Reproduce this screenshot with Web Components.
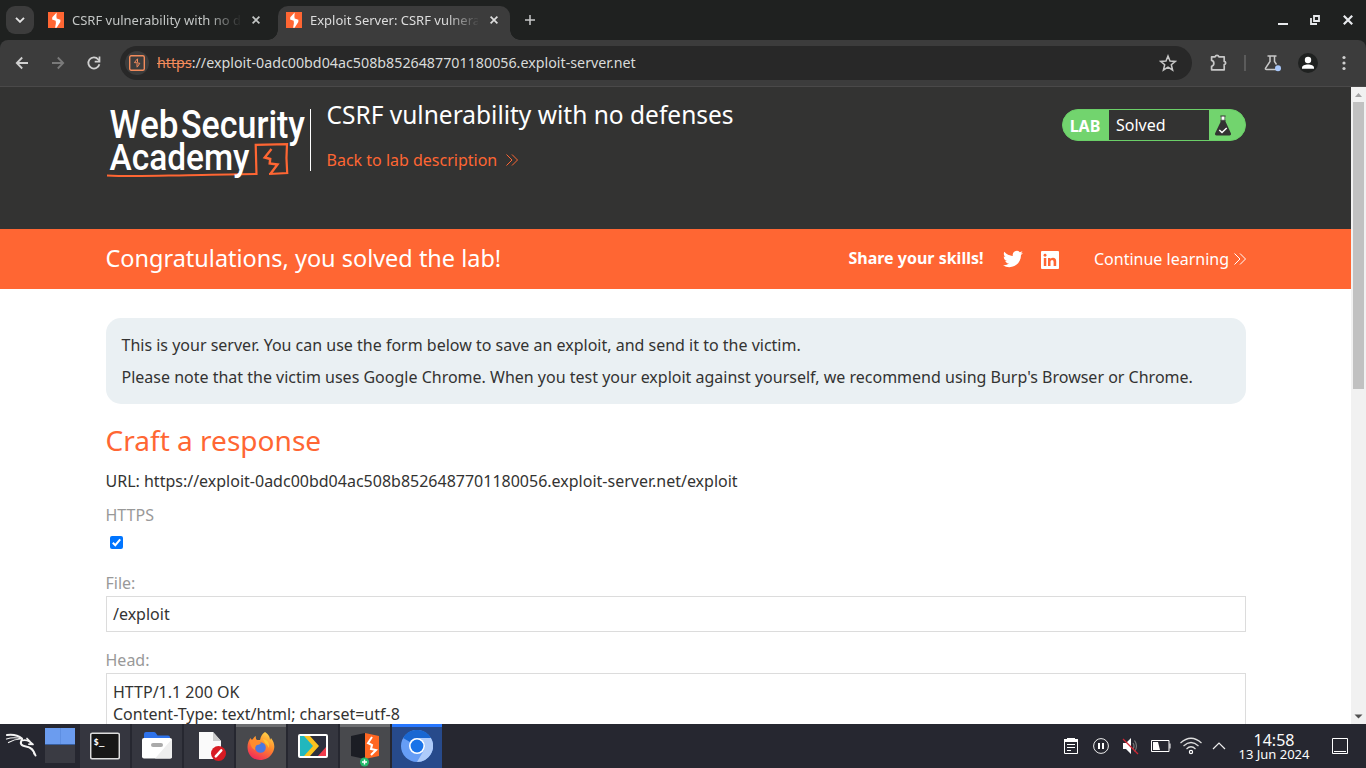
<!DOCTYPE html>
<html lang="en">
<head>
<meta charset="utf-8">
<title>Exploit Server: CSRF vulnerability with no defenses</title>
<style>
html,body{margin:0;height:100%;overflow:hidden;background:#fff}
body{font-family:"Noto Sans",sans-serif}
</style>
</head>
<body>
<desktop-screen></desktop-screen>
<script>
const define = (name, html) => {
  const t = document.createElement('template');
  t.innerHTML = html;
  customElements.define(name, class extends HTMLElement {
    constructor() {
      super();
      this.attachShadow({ mode: 'open' }).appendChild(t.content.cloneNode(true));
    }
  });
};

define('burp-mark', `
<style>:host{display:block;width:16px;height:16px;flex:none}svg{display:block}</style>
<svg width="16" height="16" viewBox="0 0 16 16"><rect width="16" height="16" fill="#ff6633"/><path d="M8.700.5L4.300 5.200l-.2 2.300 3.600 1.200.2 2.600-.8 4.500h1.500L12.300 9.900l.1-2.200-3.700-1.300-.3-2z" fill="#fff"/></svg>`);

define('browser-tab', `
<style>
:host{display:flex;align-items:center;box-sizing:border-box;width:232px;height:34px;padding:0 0 6px 8px;color:#c3c6c5;font-size:13px;line-height:18px;position:relative}
:host([active]){background:#3c3c3c;border-radius:10px 10px 0 0;color:#dedede}
:host([active])::before,:host([active])::after{content:"";position:absolute;bottom:0;width:10px;height:10px}
:host([active])::before{left:-10px;background:radial-gradient(circle at 0 0,transparent 9.5px,#3c3c3c 10px)}
:host([active])::after{right:-10px;background:radial-gradient(circle at 100% 0,transparent 9.5px,#3c3c3c 10px)}
.t{margin-left:8px;width:168px;overflow:hidden;white-space:nowrap;-webkit-mask:linear-gradient(90deg,#000 136px,transparent 170px);mask:linear-gradient(90deg,#000 136px,transparent 170px)}
svg{margin-left:12px;display:block}
</style>
<burp-mark></burp-mark><div class="t"><slot></slot></div>
<svg width="8" height="8" viewBox="0 0 8 8"><path d="M.6.6l6.8 6.8M7.4.6L.6 7.4" stroke="currentColor" stroke-width="1.7"/></svg>`);

define('tab-strip', `
<style>
:host{display:flex;height:40px;box-sizing:border-box;padding:6px 13px 0 6px;background:#1f2120}
.menu{width:28px;height:28px;border-radius:9px;background:#3c3c3c;display:grid;place-items:center;margin-right:6px}
browser-tab+browser-tab{margin-left:6px}
.plus{margin:9px 0 0 15px}.win{margin:9px 0 0 auto;display:flex;gap:22px}
svg{display:block}
</style>
<div class="menu"><svg width="10" height="6" viewBox="0 0 10 6"><path d="M1 .8l4 4 4-4" fill="none" stroke="#e4e4e4" stroke-width="1.9"/></svg></div>
<browser-tab>CSRF vulnerability with no defenses</browser-tab>
<browser-tab active>Exploit Server: CSRF vulnerability with no defenses</browser-tab>
<svg class="plus" width="10" height="10" viewBox="0 0 10 10"><path d="M5 0v10M0 5h10" stroke="#c8c8c8" stroke-width="1.5"/></svg>
<div class="win">
<svg width="10" height="10"><path d="M0 9h10" stroke="#e8eaed" stroke-width="2"/></svg>
<svg width="10" height="10"><path d="M4 1h5v5H4zM1 3v6h6" fill="none" stroke="#e8eaed" stroke-width="1.8"/></svg>
<svg width="10" height="10" style="margin-left:1px"><path d="M.8.8l8.400 8.400M9.200.8L.8 9.200" stroke="#e8eaed" stroke-width="2.200"/></svg>
</div>`);

define('tool-bar', `
<style>
:host{display:block;background:#1f2120;height:47px}
.bar{display:flex;align-items:center;box-sizing:border-box;height:47px;padding:0 20px 1px 14px;background:#3c3c3c;border-radius:8px 8px 0 0;border-bottom:1px solid #4a4949}
svg{display:block;flex:none}
.url{display:flex;flex:none;align-items:center;width:1072px;height:34px;border-radius:17px;background:#282828;margin-left:18px;box-sizing:border-box;padding:0 15px 0 5px;color:#d9dbda;font-size:14.28px;line-height:20px}
.chip{width:24px;height:24px;border-radius:12px;background:#3c3c3c;display:grid;place-items:center;margin-right:8px}
.u{flex:1;white-space:nowrap}s{color:#f28b5c;text-decoration-thickness:1px}
.sep{width:2px;height:16px;background:#5b5b5b;margin-left:16px}
</style>
<div class="bar">
<svg width="16" height="16" viewBox="0 0 16 16"><path d="M8.2 2.5L2.8 8l5.4 5.5M3 8h11" fill="none" stroke="#d0d0d0" stroke-width="1.8"/></svg>
<svg width="16" height="16" viewBox="0 0 16 16" style="margin-left:20px"><path d="M7.8 2.5L13.2 8l-5.4 5.5M2 8h11" fill="none" stroke="#7a7a7a" stroke-width="1.8"/></svg>
<svg width="16" height="16" viewBox="0 0 16 16" style="margin-left:20px"><path d="M13.4 9.3A5.6 5.6 0 1 1 12.2 4.3L13.5 5.7" fill="none" stroke="#d0d0d0" stroke-width="1.8"/><path d="M13.5 1.6v5H8.7" fill="none" stroke="#d0d0d0" stroke-width="1.7"/></svg>
<div class="url"><div class="chip"><svg width="16" height="16" viewBox="0 0 16 16"><rect x=".7" y=".7" width="14.6" height="14.6" rx="1.5" fill="none" stroke="#f28b5c" stroke-width="1.4"/><path d="M8.600 3.600L5.400 7.600l2.900.3 2.500.4-2.700 4M8.500 4v3.500M8 8.500v3.300" fill="none" stroke="#f28b5c" stroke-width="1"/></svg></div>
<div class="u"><s>https</s>://exploit-0adc00bd04ac508b8526487701180056.exploit-server.net</div>
<svg width="18" height="18" viewBox="0 0 18 18"><path d="M9 2l2 5 5.3.4-4 3.4 1.3 5.2L9 13.1 4.4 16l1.3-5.2-4-3.4L7 7z" fill="none" stroke="#c7c7c7" stroke-width="1.5"/></svg></div>
<svg width="18" height="18" viewBox="0 0 18 18" style="margin-left:18px"><path d="M1.6 2.8h3.5c.5-2 3.3-2 3.8 0h5.3v4.6c2 .4 2 2.800 0 3.2v5.200H1.600v-3.500c3-.6 3-5.300 0-5.900z" fill="none" stroke="#c7c7c7" stroke-width="1.700" stroke-linejoin="round"/></svg>
<div class="sep"></div>
<svg width="18" height="18" viewBox="0 0 18 18" style="margin-left:18px"><path d="M3.500 2h9M6 2v5.500L1.600 14q-.6 1.500 1 1.500h11M10.500 2v5.500l2 3" fill="none" stroke="#c7c7c7" stroke-width="1.500"/><circle cx="14" cy="14.200" r="3" fill="#a8c7fa"/></svg>
<svg width="20" height="20" viewBox="0 0 20 20" style="margin-left:16px"><circle cx="10" cy="10" r="10" fill="#1f2120"/><circle cx="10" cy="7" r="3.200" fill="#fff"/><path d="M4 15.800v-1.300c0-2 3-3.100 6-3.100s6 1.100 6 3.100v1.300z" fill="#fff"/></svg>
<svg width="4" height="16" viewBox="0 0 4 16" style="margin-left:24px"><g fill="#d0d0d0"><circle cx="2" cy="2.500" r="1.600"/><circle cx="2" cy="8" r="1.600"/><circle cx="2" cy="13.500" r="1.600"/></g></svg>
</div>`);

define('double-chevron', `
<style>:host{display:inline-block;width:12px;height:12px}svg{display:block}</style>
<svg width="12" height="12" viewBox="0 0 12 12"><path d="M.5.5L6 6 .5 11.500M6 .5L11.500 6 6 11.500" fill="none" stroke="currentColor" stroke-width="1"/></svg>`);

define('academy-logo', `
<style>:host{display:block;width:204.5px;height:76px}svg{display:block;overflow:visible}text{font-family:Roboto,sans-serif;font-weight:500;fill:#fff}</style>
<svg width="204" height="76" viewBox="106 105 204 76">
<path d="M107 175.500c30 1.500 60-.3 95-.6 20-.5 40-1 54.500-1" fill="none" stroke="#ff6633" stroke-width="2"/>
<path d="M256.500 175L255.700 144.800l31.300-.6q-1.200 14 .2 28.800L269 174" fill="none" stroke="#ff6633" stroke-width="2.200"/>
<path d="M271.500 149l-6.800 8.500 5.500 1.500-.500 4.500 7.800 1-7 9.300" fill="none" stroke="#ff6633" stroke-width="2.400"/>
<text x="109.500" y="137.700" font-size="38" textLength="69" lengthAdjust="spacingAndGlyphs">Web</text>
<text x="181" y="137.700" font-size="38" textLength="124" lengthAdjust="spacingAndGlyphs">Security</text>
<text x="109.500" y="170" font-size="37.500" textLength="140" lengthAdjust="spacingAndGlyphs">Academy</text></svg>`);

define('lab-status', `
<style>
:host{display:flex;box-sizing:border-box;width:184px;height:32px;border:1px solid #6bcf68;border-radius:16px;background:#72d46e;overflow:hidden;color:#fff;line-height:30px;font-size:16px}
b{width:46px;padding-right:1px;text-align:center;font-weight:700;padding-top:1px;box-sizing:border-box}
span{width:100px;box-sizing:border-box;padding-left:7.5px;background:#333332}
svg{margin:4px 0 0 4px}
</style><b>LAB</b><span>Solved</span>
<svg width="20" height="24" viewBox="0 0 20 24"><path d="M7.500 6h5v1.500L18 19.500q.4 2-1.500 2h-13q-1.900 0-1.500-2L7.500 8z" fill="#333332"/><path d="M7 2h6M8.200 2h3.600v4.200H8.200z" fill="#fff" stroke="#333332" stroke-width=".6"/><path d="M6.300 16l2.700 2.500L13.700 14" fill="none" stroke="#fff" stroke-width="1.500"/></svg>`);

define('lab-header', `
<style>
:host{display:flex;height:142px;box-sizing:border-box;background:#333332;padding:18px 105.5px 0 105.5px}
.r{border-left:1px solid #fff;height:62px;margin-top:4px;padding-left:15.5px;flex:1}
h2{margin:-11px 0 0;font-size:24.5px;line-height:33px;font-weight:400;color:#fff}
.bk{display:flex;align-items:center;color:#ff6633;line-height:22px;margin-top:18px;gap:9px}
lab-status{margin-top:4px}
</style>
<academy-logo></academy-logo><div class="r"><h2>CSRF vulnerability with no defenses</h2><div class="bk">Back to lab description<double-chevron></double-chevron></div></div><lab-status></lab-status>`);

define('solved-banner', `
<style>
:host{display:flex;align-items:center;height:60px;box-sizing:border-box;background:#ff6633;color:#fff;padding:0 105.5px 0 105.5px}
h3{margin:-2px 0 0;flex:1;font-size:23.48px;line-height:33px;font-weight:400}
b{font-weight:700;line-height:22px;margin-top:-3px}
.c{display:flex;align-items:center;gap:4.5px;line-height:22px;margin-left:35px}
svg{display:block}
</style>
<h3>Congratulations, you solved the lab!</h3><b>Share your skills!</b>
<svg width="20" height="20" viewBox="0 0 24 24" style="margin-left:19.5px"><path fill="#fff" d="M23.950 4.570a10 10 0 0 1-2.820.770 4.960 4.960 0 0 0 2.160-2.720c-.950.550-2 .950-3.120 1.180a4.920 4.920 0 0 0-8.390 4.480C7.690 8.090 4.070 6.130 1.640 3.160a4.820 4.820 0 0 0-.670 2.480c0 1.710.870 3.210 2.190 4.100a4.900 4.900 0 0 1-2.230-.620v.060a4.920 4.920 0 0 0 3.950 4.830 5 5 0 0 1-2.210.080 4.940 4.940 0 0 0 4.600 3.420A9.870 9.870 0 0 1 0 19.540a14 14 0 0 0 7.550 2.210c9.050 0 14-7.500 14-13.980l-.020-.640a9.940 9.940 0 0 0 2.420-2.560z"/></svg>
<svg width="18" height="18" viewBox="0 0 18 18" style="margin:1px 0 0 18px"><rect width="18" height="18" rx="1" fill="#fff"/><path d="M2.800 7h2.500v8H2.800zM7 7h2.500v8H7zM9.500 10.500q.2-1.500 1.600-1.500 1.500 0 1.500 1.900V15h2.600v-4.700q0-3.500-3.200-3.500-1.700 0-2.500 1.300z" fill="#ff6633"/><circle cx="4.050" cy="4.300" r="1.450" fill="#ff6633"/></svg>
<div class="c">Continue learning<double-chevron></double-chevron></div>`);

define('form-field', `
<style>:host{display:block}label{display:block;color:#999;line-height:22px;height:24px}
.b{border:1px solid #dcdcdc;box-sizing:border-box;height:var(--h,36px);padding:var(--p,6px) 6.500px;line-height:22px;color:#333332;white-space:pre-line}</style>
<label><slot name="label"></slot></label><div class="b"><slot></slot></div>`);

define('check-box', `
<style>:host{display:block;width:13px;height:13px}svg{display:block}</style>
<svg width="13" height="13"><rect width="13" height="13" rx="2" fill="#0075ff"/><path d="M2.800 6.700l2.500 2.500L10.200 3.300" fill="none" stroke="#fff" stroke-width="2"/></svg>`);

define('exploit-form', `
<style>
:host{display:block;padding:29px 105.5px 0 105.5px;color:#333332;font-size:16px;line-height:22px}
.n{box-sizing:border-box;height:86px;border-radius:15px;background:#eaf0f3;padding:16px;display:grid;gap:10px}
h1{font-weight:400;font-size:28.05px;line-height:38px;margin:17px 0 11px;color:#ff6633}
.h{color:#999;margin-top:12px}check-box{margin:10px 0 0 4.5px}form-field{margin-top:23px}form-field+form-field{margin-top:17px;--h:140px;--p:7px}
</style>
<div class="n"><div>This is your server. You can use the form below to save an exploit, and send it to the victim.</div><div>Please note that the victim uses Google Chrome. When you test your exploit against yourself, we recommend using Burp's Browser or Chrome.</div></div>
<h1>Craft a response</h1>
<div>URL: https://exploit-0adc00bd04ac508b8526487701180056.exploit-server.net/exploit</div>
<div class="h">HTTPS</div><check-box></check-box>
<form-field><span slot="label">File:</span>/exploit</form-field>
<form-field><span slot="label">Head:</span>HTTP/1.1 200 OK<br>Content-Type: text/html; charset=utf-8</form-field>`);

define('scroll-bar', `
<style>:host{display:flex;flex-direction:column;width:15px;background:#f1f1f1;align-items:center}.t{width:11px;height:287px;background:#c1c1c1;margin-bottom:auto}svg{display:block}</style>
<svg width="15" height="15"><path d="M4 10l3.500-4L11 10z" fill="#a3a3a3"/></svg><div class="t"></div><svg width="15" height="15"><path d="M3.500 5.500h8l-4 4z" fill="#505050"/></svg>`);

define('task-item', `
<style>:host{display:grid;place-items:center;box-sizing:border-box;width:50px;height:44px;background:#35363f;border-top:3px solid #35363f;padding-bottom:3px}
:host([open]){background:#48494d;border-top-color:#6d6e71}:host([active]){background:#274a8b;border-top-color:#2777ff}</style><slot></slot>`);

define('task-bar', `
<style>
:host{display:flex;height:44px;background:#262730;color:#fcfcfc}
svg{display:block;flex:none}
.items{display:flex;gap:2px;margin-left:5px}
.pager{width:30px;margin:4px 0 0 5px}.pager div{height:18px;background:#3a3b43}.pager div:first-child{background:linear-gradient(90deg,transparent 15px,#5e8fe2 15px 16px,transparent 16px),#6b9cef;border-bottom:1px solid #385f9f;height:16px}
.tray{margin-left:auto;display:flex;align-items:center;padding-right:18px}
.clock{text-align:center;width:80px;margin:0 0 0 8px;white-space:nowrap}.clock div{font-size:16px;line-height:18px}.clock div+div{font-size:13px;line-height:14px;margin-top:-2px}
</style>
<svg width="40" height="44" viewBox="0 0 40 44"><g fill="none" stroke="#f4f4f4" stroke-linecap="round" stroke-linejoin="round"><path d="M7 11c6-.8 11 .2 15 3.500" stroke-width="2"/><path d="M6.500 15c5-1.700 10-1.500 14.500-.5M8.500 18.500c4-2.300 8-3.500 12-3.500" stroke-width="1.200"/><path d="M22 15.500c-2.500 4-1 6.500 4 7 5 .5 7.500 3 9.500 9" stroke-width="2"/><path d="M22 16.500c3-1 5-.5 7.500 1l3.500 3-4-.3M27 14.500l3 3" stroke-width="1.700"/><path d="M28 23c4 .8 6 3.500 6 7" stroke-width="1.200"/></g></svg>
<div class="pager"><div></div><div></div></div>
<div class="items">
<task-item><svg width="30" height="30" viewBox="0 0 30 30"><rect x=".7" y="2.200" width="28.600" height="25.600" rx="1.500" fill="#171717" stroke="#ddd" stroke-width="1.500"/><text x="3.500" y="14" fill="#fff" font-family="DejaVu Sans Mono,monospace" font-weight="700" font-size="9">$_</text></svg></task-item>
<task-item><svg width="30" height="30" viewBox="0 0 30 30"><path d="M2 3q0-2 2-2h8q1.500 0 2.500 2l1 1.500H26q2 0 2 2V12H2z" fill="#2e72ea"/><rect y="7" width="30" height="20.500" rx="2" fill="#fff"/><path d="M30 8v18q0 1.500-2 1.500H13z" fill="#eee"/><rect x="9" y="12" width="12" height="4" rx="2" fill="#aaa"/></svg></task-item>
<task-item><svg width="30" height="30" viewBox="0 0 30 30" style="margin-left:3px"><path d="M3 1h14l8 9v18H3z" fill="#fafafa"/><path d="M17 1l8 9h-8z" fill="#ccc"/><circle cx="22.500" cy="22.500" r="7.500" fill="#d81b22"/><path d="M19.800 25.300l5.500-6" stroke="#fff" stroke-width="2.500" stroke-linecap="round"/></svg></task-item>
<task-item open><svg width="30" height="30" viewBox="0 0 30 30"><defs><linearGradient id="f" x1=".8" y1="0" x2=".3" y2="1"><stop offset="0" stop-color="#ffd94a"/><stop offset=".45" stop-color="#ff8a2b"/><stop offset="1" stop-color="#f0285a"/></linearGradient></defs><path d="M19 1c4 3 5 5 5 8l1-2c4 5 4 10 2 14-3 6-8 8-13 8C7 29 1.500 24 1.500 16c0-4 1.500-7 3-9l1.500 3c1-2.500 2-4 4-5-.5 2 0 3 1 4h3c1-4 2-6 5-8z" fill="url(#f)"/><circle cx="14.500" cy="16.500" r="5.300" fill="#4a78e0"/><path d="M4 9c3-1 7 0 10 2 2 1 0 3-3 3-2 1-2 3-2 5C5 17 4 13 4 9z" fill="#ff8c2e"/><path d="M17 8q7 1 6 9-1-3-4-5z" fill="#ffc52f"/></svg></task-item>
<task-item><svg width="30" height="26" viewBox="0 0 30 26"><rect x="1" y="2" width="28" height="22" rx="1" fill="#2d2f3d" stroke="#fff" stroke-width="2"/><path d="M2 3h5l9 10-9 10H2z" fill="#21b7bd"/><path d="M6 3h6l9 10-9 10H6l9-10z" fill="#fbc21f"/><path d="M28 14v9h-8z" fill="#f13d4d"/></svg></task-item>
<task-item open><svg width="30" height="36" viewBox="0 0 30 36" style="margin-top:4px"><path d="M1 5l14-3v26L1 25z" fill="#1b1d24"/><path d="M15 2l14 3v20l-14 3z" fill="#ff6722"/><path d="M22 6l-4 6 4 2-1 4 5 1-5 5" fill="none" stroke="#fff" stroke-width="2"/><circle cx="14.500" cy="31" r="4.500" fill="#23bb6b"/><path d="M12 31h5M14.500 28.500v5" stroke="#fff" stroke-width="1.400"/></svg></task-item>
<task-item active><svg width="32" height="32" viewBox="0 0 32 32"><circle cx="16" cy="16" r="16" fill="#669df6"/><path d="M2.100 8A16 16 0 0 1 29.900 8L16 8A8 8 0 0 0 9 12z" fill="#1967d2"/><path d="M29.900 8A16 16 0 0 1 16 32L23 20A8 8 0 0 0 16 8z" fill="#aecbfa"/><circle cx="16" cy="16" r="8" fill="#fff"/><circle cx="16" cy="16" r="6.400" fill="#1a73e8"/></svg></task-item>
</div>
<div class="tray">
<svg width="14" height="16" viewBox="0 0 14 16"><path d="M.5 1.500h13v14H.5z" fill="none" stroke="#fff"/><path d="M3 0h8v4H3zM0 1h14v3H0z" fill="#fff"/><path d="M3 6.500h8M3 9.500h8M3 12.500h4" stroke="#fff"/></svg>
<svg width="16" height="16" viewBox="0 0 16 16" style="margin-left:15px"><circle cx="8" cy="8" r="7.400" fill="none" stroke="#eee"/><path d="M6 5v6M10 5v6" stroke="#fff" stroke-width="2"/></svg>
<svg width="17" height="17" viewBox="0 0 17 17" style="margin-left:13px"><path d="M1 5h3l5-5v16l-5-5H1z" fill="#fff"/><path d="M11 5q2 3 0 6M12.500 2.500q4 5.500 0 11" fill="none" stroke="#777" stroke-width="1.200"/><path d="M1 1l15 15" stroke="#d22532" stroke-width="1.200"/></svg>
<svg width="20" height="12" viewBox="0 0 20 12" style="margin-left:12px"><path d="M.5.500h17.500v11H.500zM19 3.500v5" fill="none" stroke="#fff"/><path d="M2 2h5l2 8H2z" fill="#fff"/></svg>
<svg width="22" height="18" viewBox="0 0 22 18" style="margin-left:9px"><g fill="none" stroke="#ddd" stroke-width="1.200"><path d="M.5 6q10.500-9.500 21 0M3.500 9q7.500-7 15 0M6.500 12q4.500-4.500 9 0"/><circle cx="11" cy="15" r="1.600" stroke="#fff"/></g></svg>
<svg width="14" height="8" viewBox="0 0 14 8" style="margin-left:10px"><path d="M1 7l6-6 6 6" fill="none" stroke="#eee" stroke-width="1.200"/></svg>
<div class="clock"><div>14:58</div><div>13 Jun 2024</div></div>
<svg width="16" height="16" viewBox="0 0 16 16" style="margin-left:18px"><path d="M.5.500h15v15H.500zM2 13.500h12" fill="none" stroke="#fff"/></svg>
</div>`);

define('desktop-screen', `
<style>
:host{display:flex;flex-direction:column;width:1366px;height:768px;overflow:hidden}
.v{flex:1;min-height:0;display:flex}.p{flex:1;overflow:hidden;background:#fff}
tab-strip,tool-bar,task-bar{flex:none}
</style>
<tab-strip></tab-strip><tool-bar></tool-bar>
<div class="v"><div class="p"><lab-header></lab-header><solved-banner></solved-banner><exploit-form></exploit-form></div><scroll-bar></scroll-bar></div>
<task-bar></task-bar>`);
</script>
</body>
</html>
